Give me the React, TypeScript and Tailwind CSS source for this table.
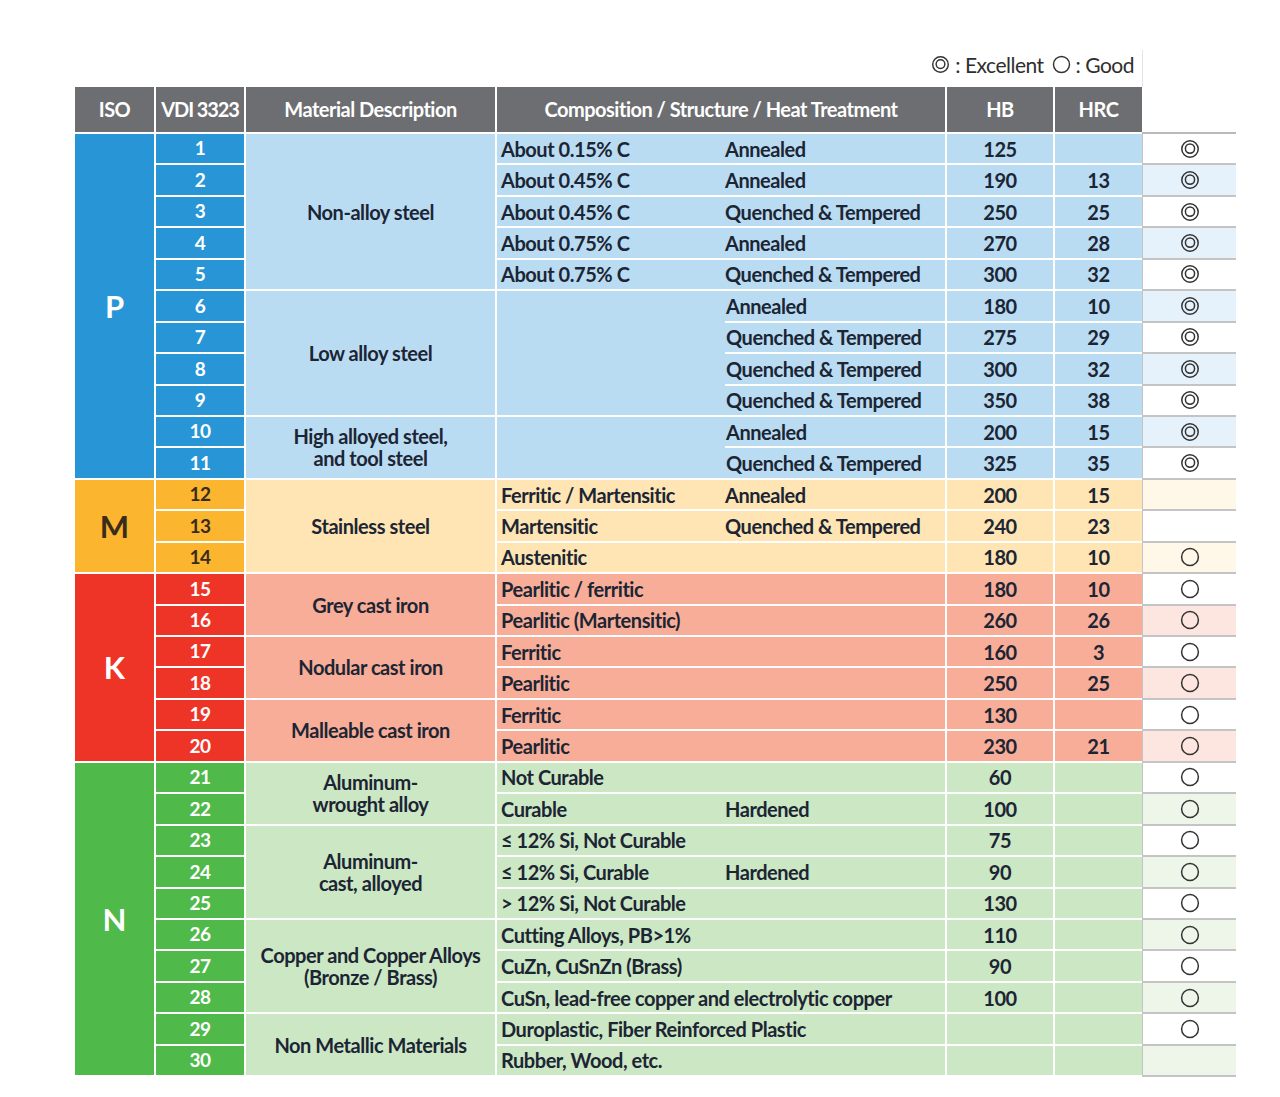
import React from "react";

type Group = {
  letter: string;
  span: string;
  dark: string;
  light: string;
  tint: string;
  letterColor: string;
  start: number;
};

const groups: Group[] = [
  { letter: "P", span: "row-span-11", dark: "bg-[#2896d6]", light: "bg-[#badcf3]", tint: "bg-[#e6f2fb]", letterColor: "text-white", start: 1 },
  { letter: "M", span: "row-span-3", dark: "bg-[#fbb52e]", light: "bg-[#fee5b3]", tint: "bg-[#fff7e7]", letterColor: "text-[#3a2c1c]", start: 12 },
  { letter: "K", span: "row-span-6", dark: "bg-[#ee3426]", light: "bg-[#f8ad99]", tint: "bg-[#fde6df]", letterColor: "text-white", start: 15 },
  { letter: "N", span: "row-span-10", dark: "bg-[#4fb94a]", light: "bg-[#cce7c4]", tint: "bg-[#eef6ea]", letterColor: "text-white", start: 21 },
];

const materials: { start: number; span: string; lines: string[] }[] = [
  { start: 1, span: "row-span-5", lines: ["Non-alloy steel"] },
  { start: 6, span: "row-span-4", lines: ["Low alloy steel"] },
  { start: 10, span: "row-span-2", lines: ["High alloyed steel,", "and tool steel"] },
  { start: 12, span: "row-span-3", lines: ["Stainless steel"] },
  { start: 15, span: "row-span-2", lines: ["Grey cast iron"] },
  { start: 17, span: "row-span-2", lines: ["Nodular cast iron"] },
  { start: 19, span: "row-span-2", lines: ["Malleable cast iron"] },
  { start: 21, span: "row-span-2", lines: ["Aluminum-", "wrought alloy"] },
  { start: 23, span: "row-span-3", lines: ["Aluminum-", "cast, alloyed"] },
  { start: 26, span: "row-span-3", lines: ["Copper and Copper Alloys", "(Bronze / Brass)"] },
  { start: 29, span: "row-span-2", lines: ["Non Metallic Materials"] },
];

// merged blank left-composition blocks
const mergedLeft: { start: number; span: string; end: number }[] = [
  { start: 6, span: "row-span-4", end: 9 },
  { start: 10, span: "row-span-2", end: 11 },
];

const QT = "Quenched & Tempered";

type Row = [string, string, string, string, number];
const rows: Row[] = [
  ["About 0.15% C", "Annealed", "125", "", 2],
  ["About 0.45% C", "Annealed", "190", "13", 2],
  ["About 0.45% C", QT, "250", "25", 2],
  ["About 0.75% C", "Annealed", "270", "28", 2],
  ["About 0.75% C", QT, "300", "32", 2],
  ["", "Annealed", "180", "10", 2],
  ["", QT, "275", "29", 2],
  ["", QT, "300", "32", 2],
  ["", QT, "350", "38", 2],
  ["", "Annealed", "200", "15", 2],
  ["", QT, "325", "35", 2],
  ["Ferritic / Martensitic", "Annealed", "200", "15", 0],
  ["Martensitic", QT, "240", "23", 0],
  ["Austenitic", "", "180", "10", 1],
  ["Pearlitic / ferritic", "", "180", "10", 1],
  ["Pearlitic (Martensitic)", "", "260", "26", 1],
  ["Ferritic", "", "160", "3", 1],
  ["Pearlitic", "", "250", "25", 1],
  ["Ferritic", "", "130", "", 1],
  ["Pearlitic", "", "230", "21", 1],
  ["Not Curable", "", "60", "", 1],
  ["Curable", "Hardened", "100", "", 1],
  ["≤ 12% Si, Not Curable", "", "75", "", 1],
  ["≤ 12% Si, Curable", "Hardened", "90", "", 1],
  ["> 12% Si, Not Curable", "", "130", "", 1],
  ["Cutting Alloys, PB>1%", "", "110", "", 1],
  ["CuZn, CuSnZn (Brass)", "", "90", "", 1],
  ["CuSn, lead-free copper and electrolytic copper", "", "100", "", 1],
  ["Duroplastic, Fiber Reinforced Plastic", "", "", "", 1],
  ["Rubber, Wood, etc.", "", "", "", 0],
];

function Excellent({ size = 20 }: { size?: number }) {
  return (
    <svg width={size} height={size} viewBox="0 0 20 20" fill="none">
      <circle cx="10" cy="10" r="8.2" stroke="#333" strokeWidth="1.5" />
      <circle cx="10" cy="9.6" r="4.6" stroke="#333" strokeWidth="1.5" />
    </svg>
  );
}

function Good({ size = 20 }: { size?: number }) {
  return (
    <svg width={size} height={size} viewBox="0 0 20 20" fill="none">
      <circle cx="10" cy="10" r="8.4" stroke="#333" strokeWidth="1.5" />
    </svg>
  );
}

function groupOf(n: number): Group {
  let g = groups[0];
  for (const gr of groups) if (n >= gr.start) g = gr;
  return g;
}

const textDark = "text-[#1c2533]";
const bodyText = "text-[20px] font-bold tracking-[-0.45px]";

export default function App() {
  const cells: React.ReactNode[] = [];
  // header
  const hd = "bg-[#6d6e71] text-white flex items-center justify-center text-[20px] font-bold tracking-[-0.5px] pb-[1px]";
  cells.push(<div key="h1" className={hd}>ISO</div>);
  cells.push(<div key="h2" className={hd + " tracking-[-1.1px]"}>VDI 3323</div>);
  cells.push(<div key="h3" className={hd}>Material Description</div>);
  cells.push(<div key="h4" className={hd + " col-span-2"}>Composition / Structure / Heat Treatment</div>);
  cells.push(<div key="h5" className={hd}>HB</div>);
  cells.push(<div key="h6" className={hd}>HRC</div>);
  cells.push(<div key="h7" className="bg-white -ml-[2px] -mb-[2px] border-b-2 border-[#b9b9b9]" />);

  rows.forEach((r, i) => {
    const n = i + 1;
    const g = groupOf(n);
    const gStart = groups.find((x) => x.start === n);
    if (gStart) {
      cells.push(
        <div key={`iso${n}`} className={`${gStart.span} ${gStart.dark} ${gStart.letterColor} flex items-center justify-center text-[31px] font-bold`}>
          {gStart.letter}
        </div>
      );
    }
    cells.push(
      <div key={`vdi${n}`} className={`${g.dark} ${g.letter === "M" ? "text-[#3a2c1c]" : "text-white"} flex items-center justify-center text-[19px] font-bold tracking-[-0.4px]`}>
        {n}
      </div>
    );
    const m = materials.find((x) => x.start === n);
    if (m) {
      cells.push(
        <div key={`mat${n}`} className={`${m.span} ${g.light} ${textDark} flex flex-col items-center justify-center ${bodyText} leading-[22px] text-center`}>
          {m.lines.map((l) => (
            <span key={l} className="whitespace-nowrap">{l}</span>
          ))}
        </div>
      );
    }
    const ml = mergedLeft.find((x) => x.start === n);
    const inMerged = mergedLeft.some((x) => n >= x.start && n <= x.end);
    if (ml) {
      cells.push(<div key={`ml${n}`} className={`${ml.span} ${g.light} -mr-[2px]`} />);
    }
    if (inMerged) {
      cells.push(
        <div key={`cr${n}`} className={`${g.light} ${textDark} flex items-center pl-[1px] ${bodyText} whitespace-nowrap`}>
          {r[1]}
        </div>
      );
    } else {
      cells.push(
        <div key={`c${n}`} className={`col-span-2 ${g.light} ${textDark} flex items-center pl-[4px] ${bodyText} whitespace-nowrap overflow-visible`}>
          <span className="w-[224px] shrink-0">{r[0]}</span>
          <span>{r[1]}</span>
        </div>
      );
    }
    cells.push(
      <div key={`hb${n}`} className={`${g.light} ${textDark} flex items-center justify-center ${bodyText}`}>
        {r[2]}
      </div>
    );
    cells.push(
      <div key={`hrc${n}`} className={`${g.light} ${textDark} flex items-center justify-center ${bodyText}`}>
        {r[3]}
      </div>
    );
    cells.push(
      <div key={`rt${n}`} className={`${n % 2 === 0 ? g.tint : "bg-white"} -ml-[2px] -mb-[2px] border-b-2 border-l border-[#c4c4c4] flex items-center justify-center`}>
        {r[4] === 2 ? <Excellent /> : r[4] === 1 ? <Good /> : null}
      </div>
    );
  });

  return (
    <div className="min-h-[1097px] w-[1280px] bg-white pt-[50px] pl-[75px] font-['Lato','Open_Sans',sans-serif]">
      <div className="w-[1068px] h-[37px] flex items-center justify-end pr-[8px] pb-[8px] border-r border-[#e4e4e4] text-[21px] text-[#2e2e2e] tracking-[-0.5px]">
        <span className="flex items-center gap-[5px]">
          <Excellent size={19} />
          <span>: Excellent</span>
        </span>
        <span className="flex items-center gap-[5px] ml-[8px]">
          <Good size={19} />
          <span>: Good</span>
        </span>
      </div>
      <div className="grid grid-cols-[79px_88px_249px_226px_220px_106px_87px_92px] grid-rows-[45px_repeat(30,29.45px)] gap-[2px] bg-white">
        {cells}
      </div>
    </div>
  );
}
